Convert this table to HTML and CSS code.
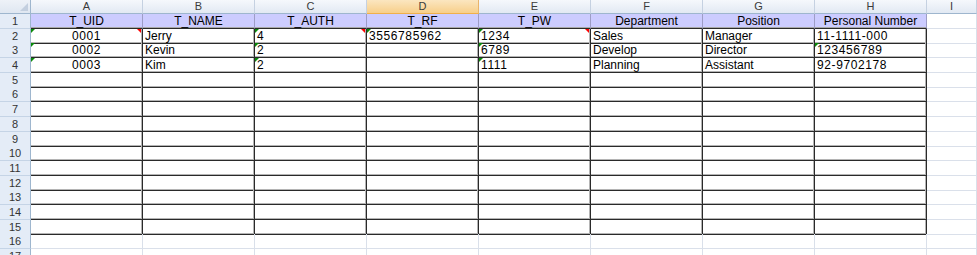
FILE: index.html
```html
<!DOCTYPE html>
<html>
<head>
<meta charset="utf-8">
<link rel="stylesheet" href="styles.css">
</head>
<body>
<div class="sheet">
  <div class="row colhead">
    <div class="corner"><span class="corner-tri"></span></div>
    <div class="ch">A</div><div class="ch">B</div><div class="ch">C</div><div class="ch sel">D</div>
    <div class="ch">E</div><div class="ch">F</div><div class="ch">G</div><div class="ch">H</div><div class="ch">I</div>
  </div>
  <div class="row">
    <div class="rh">1</div>
    <div class="c h">T_UID</div><div class="c h">T_NAME</div><div class="c h">T_AUTH</div><div class="c h">T_RF</div>
    <div class="c h">T_PW</div><div class="c h">Department</div><div class="c h">Position</div><div class="c h">Personal Number</div>
    <div class="c g"></div>
  </div>
  <div class="row">
    <div class="rh">2</div>
    <div class="c t ctr num gr rd">0001</div><div class="c t">Jerry</div><div class="c t num gr rd">4</div><div class="c t num gr">3556785962</div>
    <div class="c t num gr rd">1234</div><div class="c t">Sales</div><div class="c t">Manager</div><div class="c t num">11-1111-000</div>
    <div class="c g"></div>
  </div>
  <div class="row">
    <div class="rh">3</div>
    <div class="c t ctr num gr">0002</div><div class="c t">Kevin</div><div class="c t num gr">2</div><div class="c t"></div>
    <div class="c t num gr">6789</div><div class="c t">Develop</div><div class="c t">Director</div><div class="c t num gr">123456789</div>
    <div class="c g"></div>
  </div>
  <div class="row">
    <div class="rh">4</div>
    <div class="c t ctr num gr">0003</div><div class="c t">Kim</div><div class="c t num gr">2</div><div class="c t"></div>
    <div class="c t num gr">1111</div><div class="c t">Planning</div><div class="c t">Assistant</div><div class="c t num">92-9702178</div>
    <div class="c g"></div>
  </div>
  <div class="row"><div class="rh">5</div><div class="c t"></div><div class="c t"></div><div class="c t"></div><div class="c t"></div><div class="c t"></div><div class="c t"></div><div class="c t"></div><div class="c t"></div><div class="c g"></div></div>
  <div class="row"><div class="rh">6</div><div class="c t"></div><div class="c t"></div><div class="c t"></div><div class="c t"></div><div class="c t"></div><div class="c t"></div><div class="c t"></div><div class="c t"></div><div class="c g"></div></div>
  <div class="row"><div class="rh">7</div><div class="c t"></div><div class="c t"></div><div class="c t"></div><div class="c t"></div><div class="c t"></div><div class="c t"></div><div class="c t"></div><div class="c t"></div><div class="c g"></div></div>
  <div class="row"><div class="rh">8</div><div class="c t"></div><div class="c t"></div><div class="c t"></div><div class="c t"></div><div class="c t"></div><div class="c t"></div><div class="c t"></div><div class="c t"></div><div class="c g"></div></div>
  <div class="row"><div class="rh">9</div><div class="c t"></div><div class="c t"></div><div class="c t"></div><div class="c t"></div><div class="c t"></div><div class="c t"></div><div class="c t"></div><div class="c t"></div><div class="c g"></div></div>
  <div class="row"><div class="rh">10</div><div class="c t"></div><div class="c t"></div><div class="c t"></div><div class="c t"></div><div class="c t"></div><div class="c t"></div><div class="c t"></div><div class="c t"></div><div class="c g"></div></div>
  <div class="row"><div class="rh">11</div><div class="c t"></div><div class="c t"></div><div class="c t"></div><div class="c t"></div><div class="c t"></div><div class="c t"></div><div class="c t"></div><div class="c t"></div><div class="c g"></div></div>
  <div class="row"><div class="rh">12</div><div class="c t"></div><div class="c t"></div><div class="c t"></div><div class="c t"></div><div class="c t"></div><div class="c t"></div><div class="c t"></div><div class="c t"></div><div class="c g"></div></div>
  <div class="row"><div class="rh">13</div><div class="c t"></div><div class="c t"></div><div class="c t"></div><div class="c t"></div><div class="c t"></div><div class="c t"></div><div class="c t"></div><div class="c t"></div><div class="c g"></div></div>
  <div class="row"><div class="rh">14</div><div class="c t"></div><div class="c t"></div><div class="c t"></div><div class="c t"></div><div class="c t"></div><div class="c t"></div><div class="c t"></div><div class="c t"></div><div class="c g"></div></div>
  <div class="row"><div class="rh">15</div><div class="c t"></div><div class="c t"></div><div class="c t"></div><div class="c t"></div><div class="c t"></div><div class="c t"></div><div class="c t"></div><div class="c t"></div><div class="c g"></div></div>
  <div class="row"><div class="rh">16</div><div class="c g"></div><div class="c g"></div><div class="c g"></div><div class="c g"></div><div class="c g"></div><div class="c g"></div><div class="c g"></div><div class="c g"></div><div class="c g"></div></div>
  <div class="row"><div class="rh">17</div><div class="c g"></div><div class="c g"></div><div class="c g"></div><div class="c g"></div><div class="c g"></div><div class="c g"></div><div class="c g"></div><div class="c g"></div><div class="c g"></div></div>
</div>
</body>
</html>
```
FILE: styles.css
```css
html, body {
  margin: 0;
  padding: 0;
  background: #ffffff;
  overflow: hidden;
}
body {
  width: 977px;
  height: 255px;
  font-family: "Liberation Sans", Arial, sans-serif;
}
.sheet {
  display: flex;
  flex-direction: column;
  width: 977px;
}
.row {
  display: grid;
  grid-template-columns: 31px repeat(8, 112px) 1fr;
  height: 14.7px;
  flex: none;
}
.colhead {
  height: 14px;
}
.corner {
  position: relative;
  background: linear-gradient(#eef2f8, #dfe7f1);
  border-right: 1px solid #9eb6ce;
  border-bottom: 1px solid #9eb6ce;
  box-sizing: border-box;
}
.corner-tri {
  position: absolute;
  right: 2px;
  bottom: 2px;
  width: 0;
  height: 0;
  border-left: 8px solid transparent;
  border-bottom: 8px solid #c3cfdf;
}
.ch {
  box-sizing: border-box;
  background: linear-gradient(#f5f8fc, #e2e9f3);
  border-right: 1px solid #c5d1e1;
  border-bottom: 1px solid #9eb6ce;
  color: #3a3a3a;
  font-size: 11px;
  line-height: 13px;
  text-align: center;
}
.ch.sel {
  background: linear-gradient(#fbe6c0, #f7cf8a);
  border-bottom: 1px solid #f0b04a;
  border-right-color: #e9b46a;
}
.rh {
  box-sizing: border-box;
  background: #e4ecf7;
  border-right: 1px solid #9eb6ce;
  border-bottom: 1px solid #c5d4e6;
  color: #333333;
  font-size: 11px;
  line-height: 14px;
  text-align: center;
}
.c {
  position: relative;
  box-sizing: border-box;
  display: flex;
  align-items: flex-end;
  padding: 0 2px;
  font-size: 12px;
  line-height: 13px;
  color: #000000;
  white-space: nowrap;
  overflow: visible;
}
.h {
  justify-content: center;
  background: #ccccff;
  border-right: 1px solid #9d9dc6;
  box-shadow: inset 0 -1px 0 #a8a8a8;
  border-bottom: 1px solid #2a2a2a;
}
.t {
  border-right: 1px solid #2a2a2a;
  border-bottom: 1px solid #2a2a2a;
  box-shadow: inset -1px -1px 0 #b4b4b4;
}
.g {
  border-right: 1px solid #dae0ea;
  border-bottom: 1px solid #dae0ea;
}
.ctr {
  justify-content: center;
}
.num {
  letter-spacing: 0.6px;
}
.gr::before {
  content: "";
  position: absolute;
  left: 0;
  top: 0;
  width: 0;
  height: 0;
  border-top: 4px solid #0a8a0a;
  border-right: 4px solid transparent;
}
.rd::after {
  content: "";
  position: absolute;
  right: 1px;
  top: 0;
  width: 0;
  height: 0;
  border-top: 4px solid #ff0000;
  border-left: 4px solid transparent;
}
```
